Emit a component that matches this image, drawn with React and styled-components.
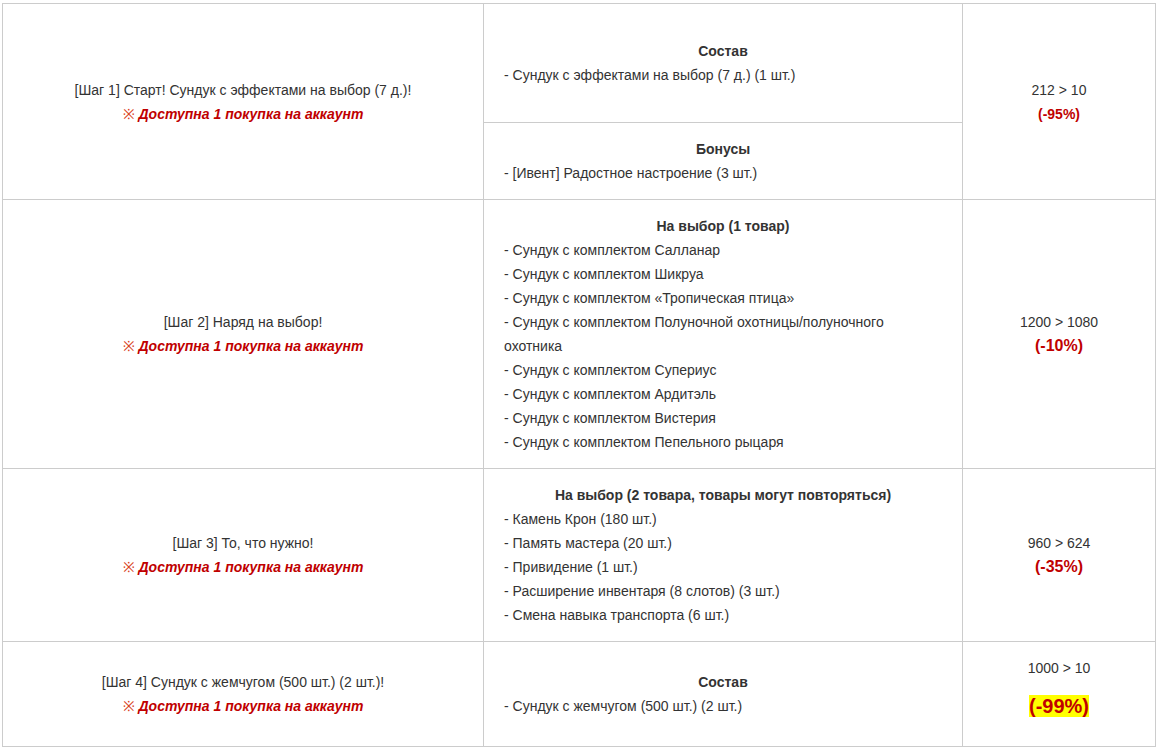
import React from "react";
import styled, { createGlobalStyle } from "styled-components";

const Global = createGlobalStyle`
  html, body { margin: 0; padding: 0; background: #fff; }
  body { font-family: "Liberation Sans", Arial, sans-serif; color: #333; }
`;

const Wrap = styled.div`
  padding: 3px 3px 0 2px;
`;

const Table = styled.table`
  width: 1153px;
  border-collapse: collapse;
  table-layout: fixed;
  font-size: 14px;
  line-height: 24px;
  color: #333;
`;

const Row = styled.tr`
  height: ${(p) => (p.$h ? `${p.$h}px` : "auto")};
`;

const Cell = styled.td`
  border: 1px solid #ccc;
  padding: 14px 20px;
  vertical-align: middle;
  text-align: ${(p) => (p.$align === "left" ? "left" : "center")};
`;

const Title = styled.div``;

const Limit = styled.div`
  color: #c00000;
  font-weight: bold;
  font-style: italic;
`;

const Mark = styled.span`
  color: #d9401c;
  font-weight: normal;
  font-style: normal;
`;

const Heading = styled.div`
  font-weight: bold;
  text-align: center;
`;

const Item = styled.div`
  text-align: left;
`;

const Price = styled.div``;

const Discount = styled.div`
  color: #c00000;
  font-weight: bold;
  font-size: ${(p) => p.$size}px;
  line-height: ${(p) => p.$lh || 24}px;
`;

const Hl = styled.span`
  background: #ffff00;
`;

function Step({ title }) {
  return (
    <>
      <Title>{title}</Title>
      <Limit>
        <Mark>※</Mark> Доступна 1 покупка на аккаунт
      </Limit>
    </>
  );
}

function Contents({ heading, items }) {
  return (
    <Cell $align="left">
      <Heading>{heading}</Heading>
      {items.map((t, i) => (
        <Item key={i}>{t}</Item>
      ))}
    </Cell>
  );
}

export default function App() {
  return (
    <>
      <Global />
      <Wrap>
        <Table>
          <colgroup>
            <col style={{ width: 481 }} />
            <col style={{ width: 479 }} />
            <col style={{ width: 193 }} />
          </colgroup>
          <tbody>
            <Row $h={119}>
              <Cell rowSpan={2}>
                <Step title="[Шаг 1] Старт! Сундук с эффектами на выбор (7 д.)!" />
              </Cell>
              <Contents heading="Состав" items={["- Сундук с эффектами на выбор (7 д.) (1 шт.)"]} />
              <Cell rowSpan={2}>
                <Price>212 &gt; 10</Price>
                <Discount $size={14}>(-95%)</Discount>
              </Cell>
            </Row>
            <Row $h={77}>
              <Contents heading="Бонусы" items={["- [Ивент] Радостное настроение (3 шт.)"]} />
            </Row>
            <Row>
              <Cell>
                <Step title="[Шаг 2] Наряд на выбор!" />
              </Cell>
              <Contents
                heading="На выбор (1 товар)"
                items={[
                  "- Сундук с комплектом Салланар",
                  "- Сундук с комплектом Шикруа",
                  "- Сундук с комплектом «Тропическая птица»",
                  "- Сундук с комплектом Полуночной охотницы/полуночного охотника",
                  "- Сундук с комплектом Супериус",
                  "- Сундук с комплектом Ардитэль",
                  "- Сундук с комплектом Вистерия",
                  "- Сундук с комплектом Пепельного рыцаря",
                ]}
              />
              <Cell>
                <Price>1200 &gt; 1080</Price>
                <Discount $size={16}>(-10%)</Discount>
              </Cell>
            </Row>
            <Row>
              <Cell>
                <Step title="[Шаг 3] То, что нужно!" />
              </Cell>
              <Contents
                heading="На выбор (2 товара, товары могут повторяться)"
                items={[
                  "- Камень Крон (180 шт.)",
                  "- Память мастера (20 шт.)",
                  "- Привидение (1 шт.)",
                  "- Расширение инвентаря (8 слотов) (3 шт.)",
                  "- Смена навыка транспорта (6 шт.)",
                ]}
              />
              <Cell>
                <Price>960 &gt; 624</Price>
                <Discount $size={16}>(-35%)</Discount>
              </Cell>
            </Row>
            <Row>
              <Cell>
                <Step title="[Шаг 4] Сундук с жемчугом (500 шт.) (2 шт.)!" />
              </Cell>
              <Contents heading="Состав" items={["- Сундук с жемчугом (500 шт.) (2 шт.)"]} />
              <Cell>
                <Price>1000 &gt; 10</Price>
                <Discount $size={20} $lh={52}>
                  <Hl>(-99%)</Hl>
                </Discount>
              </Cell>
            </Row>
          </tbody>
        </Table>
      </Wrap>
    </>
  );
}
